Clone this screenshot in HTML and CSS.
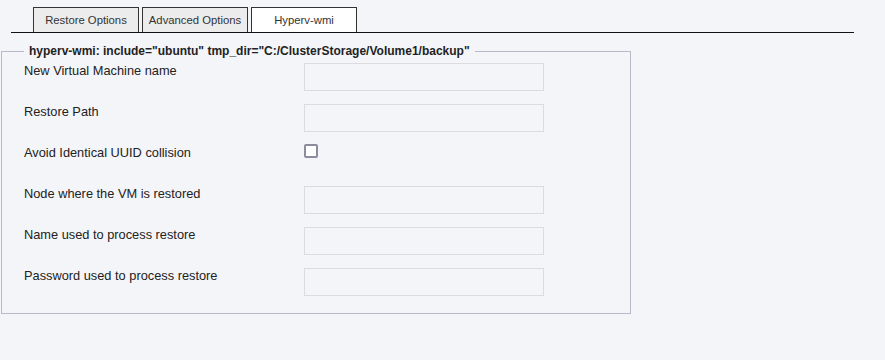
FILE: index.html
```html
<!DOCTYPE html>
<html lang="en">
<head>
    <meta charset="UTF-8">
    <title>Restore - Hyperv-wmi</title>
    <link rel="stylesheet" href="styles.css">
</head>
<body>
    <div class="tabs">
        <div class="tab">Restore Options</div>
        <div class="tab">Advanced Options</div>
        <div class="tab active">Hyperv-wmi</div>
    </div>

    <fieldset class="plugin">
        <legend>hyperv-wmi: include="ubuntu" tmp_dir="C:/ClusterStorage/Volume1/backup"</legend>

        <div class="row">
            <label>New Virtual Machine name</label>
            <input type="text" class="field">
        </div>
        <div class="row">
            <label>Restore Path</label>
            <input type="text" class="field">
        </div>
        <div class="row">
            <label>Avoid Identical UUID collision</label>
            <span class="check"></span>
        </div>
        <div class="row">
            <label>Node where the VM is restored</label>
            <input type="text" class="field">
        </div>
        <div class="row">
            <label>Name used to process restore</label>
            <input type="text" class="field">
        </div>
        <div class="row">
            <label>Password used to process restore</label>
            <input type="password" class="field">
        </div>
    </fieldset>
</body>
</html>
```

FILE: styles.css
```css
* {
    box-sizing: border-box;
}

body {
    margin: 0;
    background: #f4f5f9;
    font-family: 'Liberation Sans', Arial, sans-serif;
    color: #222;
}

.tabs {
    display: flex;
    gap: 3px;
    width: 843px;
    margin-left: 11px;
    padding: 7px 0 0 22px;
    border-bottom: 1px solid #111;
}

.tab {
    width: 106px;
    height: 25px;
    line-height: 24px;
    text-align: center;
    font-size: 11.3px;
    color: #333;
    background: #ececec;
    border: 1px solid #333;
    border-bottom: none;
}

.tab.active {
    background: #ffffff;
}

.plugin {
    width: 630px;
    margin: 11px 0 0 1px;
    padding: 5px 22px 17px;
    border: 1px solid #b9b9cc;
}

.plugin legend {
    padding: 0 5px;
    font-size: 12px;
    line-height: 14px;
    font-weight: 700;
    color: #222;
}

.row {
    display: flex;
    align-items: flex-start;
    height: 28px;
    margin-bottom: 13px;
}

.row:last-child {
    margin-bottom: 0;
}

.row label {
    width: 280px;
    font-size: 12.8px;
    line-height: 15px;
    color: #222;
}

.field {
    width: 240px;
    height: 28px;
    margin: 0;
    border: 1px solid #dcdcdf;
    background: #f4f5f9;
    outline: none;
}

.check {
    width: 14px;
    height: 14px;
    margin-top: -1px;
    border: 2px solid #8c8c9c;
    border-radius: 2px;
    background: #fff;
}
```
